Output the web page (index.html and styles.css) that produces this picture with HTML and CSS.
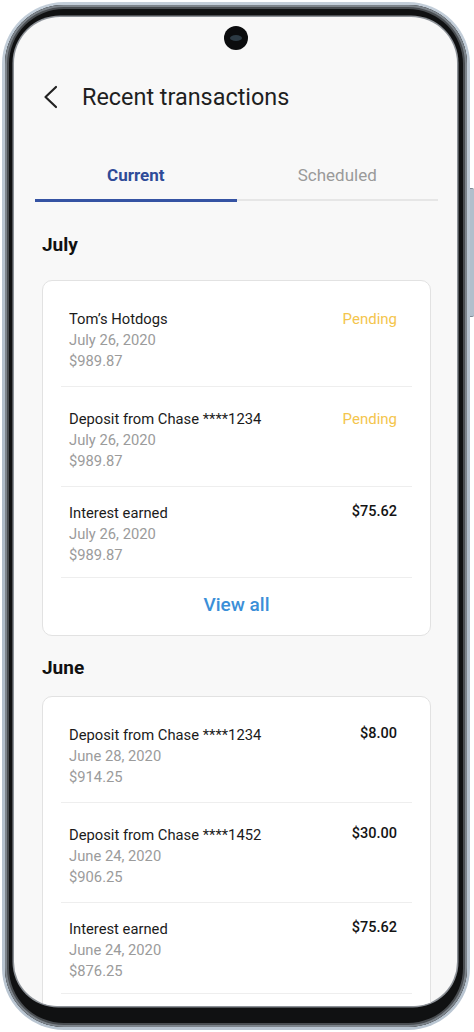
FILE: index.html
```html
<!DOCTYPE html>
<html lang="en">
<head>
<meta charset="utf-8">
<title>Recent transactions</title>
<link rel="stylesheet" href="styles.css">
</head>
<body>
<div class="phone">
  <div class="side-button"></div>
  <div class="bezel">
    <div class="screen">
      <div class="camera"><div class="lens"></div></div>
      <header class="header">
        <svg class="back" width="16" height="24" viewBox="0 0 16 24" aria-hidden="true">
          <path d="M14 2 L3.5 12 L14 22" fill="none" stroke="#222" stroke-width="2.2" stroke-linecap="round" stroke-linejoin="round"/>
        </svg>
        <h1 class="title">Recent transactions</h1>
      </header>
      <nav class="tabs">
        <div class="tab active">Current</div>
        <div class="tab">Scheduled</div>
      </nav>

      <h2 class="month month-first">July</h2>
      <section class="card">
        <div class="row">
          <div class="info">
            <div class="name">Tom’s Hotdogs</div>
            <div class="sub">July 26, 2020</div>
            <div class="sub">$989.87</div>
          </div>
          <div class="value pending">Pending</div>
        </div>
        <div class="row">
          <div class="info">
            <div class="name">Deposit from Chase ****1234</div>
            <div class="sub">July 26, 2020</div>
            <div class="sub">$989.87</div>
          </div>
          <div class="value pending">Pending</div>
        </div>
        <div class="row">
          <div class="info">
            <div class="name">Interest earned</div>
            <div class="sub">July 26, 2020</div>
            <div class="sub">$989.87</div>
          </div>
          <div class="value amount">$75.62</div>
        </div>
        <div class="view-all">View all</div>
      </section>

      <h2 class="month">June</h2>
      <section class="card card-last">
        <div class="row">
          <div class="info">
            <div class="name">Deposit from Chase ****1234</div>
            <div class="sub">June 28, 2020</div>
            <div class="sub">$914.25</div>
          </div>
          <div class="value amount">$8.00</div>
        </div>
        <div class="row">
          <div class="info">
            <div class="name">Deposit from Chase ****1452</div>
            <div class="sub">June 24, 2020</div>
            <div class="sub">$906.25</div>
          </div>
          <div class="value amount">$30.00</div>
        </div>
        <div class="row">
          <div class="info">
            <div class="name">Interest earned</div>
            <div class="sub">June 24, 2020</div>
            <div class="sub">$876.25</div>
          </div>
          <div class="value amount">$75.62</div>
        </div>
      </section>
    </div>
  </div>
</div>
</body>
</html>
```

FILE: styles.css
```css
* { box-sizing: border-box; }

html, body {
  margin: 0;
  padding: 0;
  background: #ffffff;
}

body {
  width: 474px;
  height: 1032px;
  overflow: hidden;
  font-family: Roboto, "Noto Sans", "Liberation Sans", sans-serif;
}

.phone {
  position: relative;
  width: 468px;
  height: 1028px;
  margin: 2px 0 0 2px;
  padding: 3px;
  border-radius: 62px;
  background: linear-gradient(180deg, #c3ced9 0%, #aebbc8 50%, #b9c5d1 100%);
}

.side-button {
  position: absolute;
  right: -4px;
  top: 186px;
  width: 4px;
  height: 129px;
  border-radius: 0 2px 2px 0;
  background: #b2bfcc;
  border-top: 1px solid #7d8a96;
  border-bottom: 1px solid #7d8a96;
}

.bezel {
  height: 100%;
  padding: 12px 10px 21px 9px;
  border-radius: 59px;
  background: #101112;
  box-shadow: inset 0 0 0 2px #7d848b, inset 0 0 0 4px #4a4e52;
}

.screen {
  position: relative;
  height: 100%;
  overflow: hidden;
  border-radius: 46px 46px 44px 44px;
  background: #f8f8f8;
  box-shadow: 0 0 0 1.5px #8c9197;
}

.camera {
  position: absolute;
  left: 210px;
  top: 9px;
  width: 24px;
  height: 24px;
  border-radius: 50%;
  background: #0b0c0e;
  display: flex;
  align-items: center;
  justify-content: center;
}

.lens {
  width: 12px;
  height: 6px;
  border-radius: 50%;
  background: #2c3a44;
}

.header {
  display: flex;
  align-items: center;
  height: 48px;
  margin-top: 56px;
  padding-left: 28px;
}

.back {
  display: block;
  flex: none;
}

.title {
  margin: 0 0 0 24px;
  font-size: 23.4px;
  font-weight: 400;
  color: #1f1f1f;
  letter-spacing: 0;
}

.tabs {
  display: flex;
  align-items: flex-start;
  margin: 30px 19px 0 21px;
}

.tab {
  flex: 1;
  height: 50px;
  line-height: 48px;
  text-align: center;
  font-size: 17px;
  color: #9a9a9a;
  border-bottom: 2px solid #e6e6e6;
}

.tab.active {
  height: 51px;
  font-weight: 700;
  color: #2f4b98;
  border-bottom: 3px solid #3553a3;
}

.month {
  margin: 20px 0 16px 28px;
  height: 24px;
  line-height: 24px;
  font-size: 19px;
  font-weight: 700;
  color: #111;
}

.month-first {
  margin-top: 31px;
  margin-bottom: 23px;
}

.card {
  margin: 0 26px 19px 28px;
  background: #ffffff;
  border: 1px solid #e2e2e2;
  border-radius: 10px;
}

.card-last {
  padding-bottom: 40px;
}

.row {
  display: flex;
  justify-content: space-between;
  align-items: flex-start;
  margin: 0 18px;
  padding: 22px 15px 14px 8px;
  border-bottom: 1px solid #eeeeee;
}

.row:nth-child(1) { padding-top: 28px; padding-bottom: 14px; }
.row:nth-child(3) { padding-top: 16px; padding-bottom: 11px; }

.info {
  line-height: 21px;
  font-size: 14.75px;
}

.name {
  color: #1b1b1b;
}

.sub {
  color: #9b9b9b;
}

.value {
  line-height: 21px;
  font-size: 15px;
}

.pending {
  color: #f4c54c;
}

.amount {
  color: #141414;
  font-weight: 500;
  font-size: 14.5px;
  margin-top: -2px;
}

.view-all {
  height: 57px;
  padding-top: 16px;
  line-height: 21px;
  text-align: center;
  font-size: 19px;
  font-weight: 500;
  color: #3b8fd8;
}
```
